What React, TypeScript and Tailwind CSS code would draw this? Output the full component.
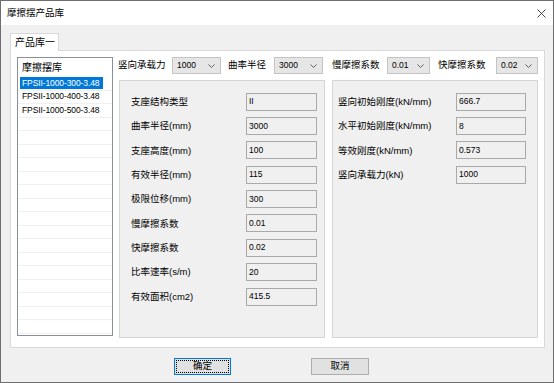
const font = { fontFamily: '"Liberation Sans", "Noto Sans CJK SC", sans-serif' };

const leftFields = [
  ["支座结构类型", "II"],
  ["曲率半径(mm)", "3000"],
  ["支座高度(mm)", "100"],
  ["有效半径(mm)", "115"],
  ["极限位移(mm)", "300"],
  ["慢摩擦系数", "0.01"],
  ["快摩擦系数", "0.02"],
  ["比率速率(s/m)", "20"],
  ["有效面积(cm2)", "415.5"],
];

const rightFields = [
  ["竖向初始刚度(kN/mm)", "666.7"],
  ["水平初始刚度(kN/mm)", "8"],
  ["等效刚度(kN/mm)", "0.573"],
  ["竖向承载力(kN)", "1000"],
];

const items = ["FPSII-1000-300-3.48", "FPSII-1000-400-3.48", "FPSII-1000-500-3.48"];

const Combo = ({ value, w }: { value: string; w: string }) => (
  <div className={`${w} flex h-[17px] items-center justify-between border border-[#c4c4c4] bg-[#e6e6e6] pl-[4px] pr-[5px]`}>
    <span className="text-[8.5px]">{value}</span>
    <svg width="7" height="4" viewBox="0 0 7 4">
      <polyline points="0.5,0.5 3.5,3.5 6.5,0.5" fill="none" stroke="#606060" strokeWidth="1" />
    </svg>
  </div>
);

const Field = ({ label, value, labelW, boxW }: { label: string; value: string; labelW: string; boxW: string }) => (
  <div className="flex h-[18px] items-center">
    <div className={`${labelW} text-[9.5px] leading-none`}>{label}</div>
    <div className={`${boxW} flex h-[18px] items-center border border-[#a9a9a9] bg-[#f0f0f0] pl-[2px] text-[8.5px]`}>
      {value}
    </div>
  </div>
);

export default function App() {
  return (
    <div className="flex h-[383px] w-[554px] flex-col border border-[#6e6e6e] bg-[#f0f0f0] text-black" style={font}>
      <div className="flex h-[24px] items-center justify-between bg-white pl-[6px] pr-[7px]">
        <span className="text-[9.5px]">摩擦摆产品库</span>
        <svg width="9" height="9" viewBox="0 0 9 9">
          <path d="M0.5 0.5 L8.5 8.5 M8.5 0.5 L0.5 8.5" stroke="#333" strokeWidth="0.9" />
        </svg>
      </div>

      <div className="flex flex-col pl-[9px] pt-[8px]">
        <div className="relative z-10 -mb-px flex h-[18px] w-[49px] items-center border border-b-0 border-[#d9d9d9] bg-white pl-[4px] text-[10px]">
          产品库一
        </div>
        <div className="flex h-[298px] w-[535px] border border-[#d9d9d9] bg-white pl-[6px] pt-[6px]">
          <div className="flex h-[279px] w-[96px] flex-col overflow-hidden border border-[#8a8f99] bg-white">
            <div className="flex h-[19px] shrink-0 items-center pl-[4px] text-[10px]">摩擦摆库</div>
            {Array.from({ length: 19 }).map((_, i) => (
              <div key={i} className="flex h-[13.5px] shrink-0 items-center border-b border-[#f0f0f0] pl-[2px]">
                {items[i] && (
                  <span
                    className={`flex h-[12px] items-center pl-[2px] pr-[4px] text-[8.5px] tracking-[-0.1px] ${
                      i === 0 ? "bg-[#0078d7] text-white" : ""
                    }`}
                  >
                    {items[i]}
                  </span>
                )}
              </div>
            ))}
          </div>

          <div className="ml-[5px] flex flex-col">
            <div className="flex h-[17px] items-center text-[9.5px]">
              <span className="w-[54px]">竖向承载力</span>
              <Combo value="1000" w="w-[49px]" />
              <span className="ml-[7px] w-[46px]">曲率半径</span>
              <Combo value="3000" w="w-[49px]" />
              <span className="ml-[9px] w-[55px]">慢摩擦系数</span>
              <Combo value="0.01" w="w-[43px]" />
              <span className="ml-[8px] w-[58px]">快摩擦系数</span>
              <Combo value="0.02" w="w-[42px]" />
            </div>

            <div className="ml-px mt-[6px] flex gap-[7px]">
              <div className="flex h-[258px] w-[206px] flex-col gap-[6.4px] border border-[#d5d5d5] bg-[#f0f0f0] pl-[11px] pt-[11.5px]">
                {leftFields.map(([l, v]) => (
                  <Field key={l} label={l} value={v} labelW="w-[115px]" boxW="w-[71px]" />
                ))}
              </div>
              <div className="flex h-[258px] w-[206px] flex-col gap-[6.4px] border border-[#d5d5d5] bg-[#f0f0f0] pl-[5px] pt-[11.5px]">
                {rightFields.map(([l, v]) => (
                  <Field key={l} label={l} value={v} labelW="w-[118px]" boxW="w-[70px]" />
                ))}
              </div>
            </div>
          </div>
        </div>

        <div className="mt-[10px] flex">
          <button className="ml-[164px] flex h-[17px] w-[57px] items-center justify-center border border-[#0078d7] bg-[#e1e1e1] p-[1px]">
            <span className="flex h-full w-full items-center justify-center border border-dotted border-black text-[9.5px]">
              确定
            </span>
          </button>
          <button className="ml-[80px] flex h-[17px] w-[58px] items-center justify-center border border-[#adadad] bg-[#e1e1e1] text-[9.5px]">
            取消
          </button>
        </div>
      </div>
    </div>
  );
}
